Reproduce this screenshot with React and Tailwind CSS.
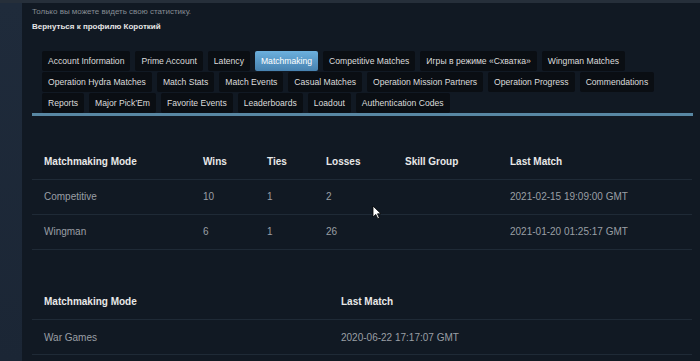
const tabRows = [
  ['Account Information', 'Prime Account', 'Latency', 'Matchmaking', 'Competitive Matches', 'Игры в режиме «Схватка»', 'Wingman Matches'],
  ['Operation Hydra Matches', 'Match Stats', 'Match Events', 'Casual Matches', 'Operation Mission Partners', 'Operation Progress', 'Commendations'],
  ['Reports', 'Major Pick’Em', 'Favorite Events', 'Leaderboards', 'Loadout', 'Authentication Codes'],
];

const modes = [
  { mode: 'Competitive', wins: '10', ties: '1', losses: '2', skill: '', last: '2021-02-15 19:09:00 GMT' },
  { mode: 'Wingman', wins: '6', ties: '1', losses: '26', skill: '', last: '2021-01-20 01:25:17 GMT' },
];

const Tab = ({ label }) => {
  const active = label === 'Matchmaking';
  return (
    <div
      className={
        'h-[20px] px-[6px] flex items-center rounded-[2px] text-[8.6px] whitespace-nowrap ' +
        (active
          ? 'bg-gradient-to-b from-[#6cb0de] to-[#4782b0] text-white'
          : 'bg-[#0a0e13] text-[#dcdcdc]')
      }
    >
      {label}
    </div>
  );
};

const Cursor = () => (
  <svg className="absolute left-[372px] top-[202px]" width="10" height="15" viewBox="0 0 10 15">
    <path d="M1 1 L1 12 L3.8 9.4 L5.8 13.8 L7.4 13 L5.5 8.8 L9 8.8 Z" fill="#fff" stroke="#000" strokeWidth="0.8" />
  </svg>
);

export default function App() {
  return (
    <div className="relative flex h-[361px] w-[700px] overflow-hidden border-t-[3px] border-[#262f3a] bg-[#111923] font-['Liberation_Sans',Arial,sans-serif]">
      <div className="w-[22px] shrink-0 bg-gradient-to-b from-[#1f2b3b] to-[#1b2635]" />
      <div className="flex-1 flex flex-col pl-[10px] pr-[7px] pt-[3px]">
        <div className="text-[8px] leading-[12px] text-[#868c93]">Только вы можете видеть свою статистику.</div>
        <div className="mt-[3px] text-[8px] leading-[12px] font-bold text-[#e6e6e6]">Вернуться к профилю Короткий</div>

        <div className="mt-[18px] flex flex-col gap-[1px] pl-[10px]">
          {tabRows.map((row, i) => (
            <div key={i} className="flex gap-[5px]">
              {row.map((t) => (
                <Tab key={t} label={t} />
              ))}
            </div>
          ))}
        </div>
        <div className="h-[3px] bg-[#5887a3]" />

        <table className="mt-[28px] w-[660px] table-fixed border-collapse text-[10px]">
          <colgroup>
            <col className="w-[159px]" />
            <col className="w-[64px]" />
            <col className="w-[59px]" />
            <col className="w-[79px]" />
            <col className="w-[105px]" />
            <col />
          </colgroup>
          <thead>
            <tr className="h-[35px] border-b border-[#1f2a36] text-left text-[#e8e8e8]">
              <th className="pl-[12px] font-bold">Matchmaking Mode</th>
              <th className="pl-[12px] font-bold">Wins</th>
              <th className="pl-[12px] font-bold">Ties</th>
              <th className="pl-[12px] font-bold">Losses</th>
              <th className="pl-[12px] font-bold">Skill Group</th>
              <th className="pl-[12px] font-bold">Last Match</th>
            </tr>
          </thead>
          <tbody>
            {modes.map((m) => (
              <tr key={m.mode} className="h-[35px] border-b border-[#1f2a36] text-[#9a9fa5]">
                <td className="pl-[12px]">{m.mode}</td>
                <td className="pl-[12px]">{m.wins}</td>
                <td className="pl-[12px]">{m.ties}</td>
                <td className="pl-[12px]">{m.losses}</td>
                <td className="pl-[12px]">{m.skill}</td>
                <td className="pl-[12px]">{m.last}</td>
              </tr>
            ))}
          </tbody>
        </table>

        <table className="mt-[35px] w-[660px] table-fixed border-collapse text-[10px]">
          <colgroup>
            <col className="w-[297px]" />
            <col />
          </colgroup>
          <thead>
            <tr className="h-[35px] border-b border-[#1f2a36] text-left text-[#e8e8e8]">
              <th className="pl-[12px] font-bold">Matchmaking Mode</th>
              <th className="pl-[12px] font-bold">Last Match</th>
            </tr>
          </thead>
          <tbody>
            <tr className="h-[35px] border-b border-[#1f2a36] text-[#9a9fa5]">
              <td className="pl-[12px]">War Games</td>
              <td className="pl-[12px]">2020-06-22 17:17:07 GMT</td>
            </tr>
          </tbody>
        </table>
      </div>
      <Cursor />
    </div>
  );
}
